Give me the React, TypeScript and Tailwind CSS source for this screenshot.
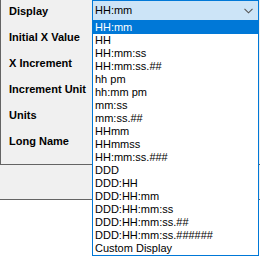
const labels = ["Display", "Initial X Value", "X Increment", "Increment Unit", "Units", "Long Name"];

const options = [
  "HH:mm",
  "HH",
  "HH:mm:ss",
  "HH:mm:ss.##",
  "hh pm",
  "hh:mm pm",
  "mm:ss",
  "mm:ss.##",
  "HHmm",
  "HHmmss",
  "HH:mm:ss.###",
  "DDD",
  "DDD:HH",
  "DDD:HH:mm",
  "DDD:HH:mm:ss",
  "DDD:HH:mm:ss.##",
  "DDD:HH:mm:ss.######",
  "Custom Display",
];

export default function App() {
  const selected = "HH:mm";
  return (
    <div className="relative h-[257px] w-[260px] overflow-hidden bg-white font-['Liberation_Sans',Arial,sans-serif] text-[11px] text-black">
      {/* property rows */}
      <div className="h-[167px] border-b border-l border-[#646464] bg-[#f0f0f0]">
        <div className="-mt-[2px] flex flex-col">
          {labels.map((l) => (
            <div key={l} className="flex h-[26px] items-center pl-2 font-bold">
              {l}
            </div>
          ))}
        </div>
      </div>
      <div className="h-[35px] border-b border-[#646464] bg-[#f0f0f0]" />

      {/* combo box */}
      <div className="absolute left-[92px] top-0 flex h-[21px] w-[167px] items-center justify-between border border-[#0078d7] bg-[#cce4f7] pl-[2px] pr-[4px]">
        <span>{selected}</span>
        <svg width="9" height="6" viewBox="0 0 9 6" className="mr-[1px]">
          <path d="M0.5 0.8 L4.5 4.8 L8.5 0.8" fill="none" stroke="#555" strokeWidth="1.1" />
        </svg>
      </div>

      {/* open list */}
      <div className="absolute left-[92px] top-[20px] w-[167px] border border-[#0078d7] bg-white">
        {options.map((o) => (
          <div
            key={o}
            className={
              o === selected
                ? "flex h-[13px] items-center bg-[#0078d7] pl-[2px] leading-none text-white"
                : "flex h-[13px] items-center pl-[2px] leading-none"
            }
          >
            {o}
          </div>
        ))}
      </div>
    </div>
  );
}
